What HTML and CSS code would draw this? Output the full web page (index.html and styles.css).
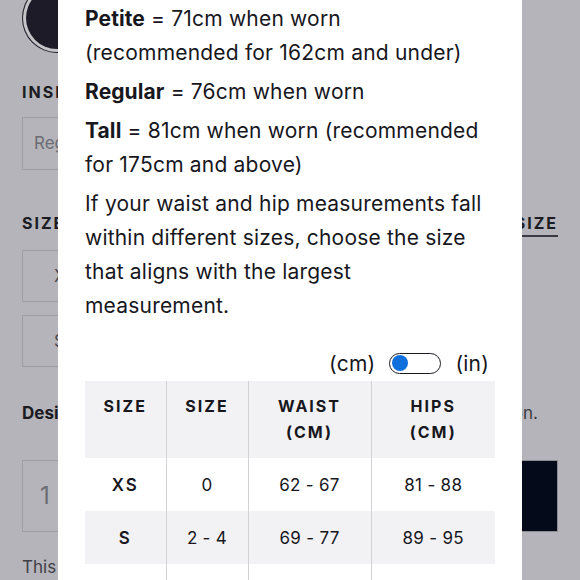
FILE: index.html
```html
<!DOCTYPE html>
<html>
<head>
<meta charset="utf-8">
<link rel="stylesheet" href="styles.css">
</head>
<body>
<div class="page">
  <div class="swatch-row"><span class="swatch"></span></div>
  <div class="label">INSEAM</div>
  <div class="select">Regular</div>
  <div class="label-row"><span class="label">SIZE</span><span class="label link">FIND MY SIZE</span></div>
  <div class="size-box first">XS</div>
  <div class="size-box">S</div>
  <div class="desc-row"><span class="desc-bold">Designed for you</span><span class="desc">in every option.</span></div>
  <div class="buy-row"><span class="qty">1</span><span class="buy"></span></div>
  <div class="note">This item ships free</div>
</div>

<div class="modal">
  <p class="para"><b>Petite</b> = 71cm when worn<br>(recommended for 162cm and under)</p>
  <p class="para"><b>Regular</b> = 76cm when worn</p>
  <p class="para"><b>Tall</b> = 81cm when worn (recommended for 175cm and above)</p>
  <p class="para">If your waist and hip measurements fall within different sizes, choose the size that aligns with the largest measurement.</p>
  <div class="units">
    <span>(cm)</span>
    <span class="toggle"><span class="knob"></span></span>
    <span>(in)</span>
  </div>
  <table class="chart">
    <colgroup><col class="c1"><col class="c2"><col class="c3"><col class="c4"></colgroup>
    <thead>
      <tr><th>SIZE</th><th>SIZE</th><th>WAIST<br>(CM)</th><th>HIPS<br>(CM)</th></tr>
    </thead>
    <tbody>
      <tr><td class="sz">XS</td><td>0</td><td>62 - 67</td><td>81 - 88</td></tr>
      <tr class="alt"><td class="sz">S</td><td>2 - 4</td><td>69 - 77</td><td>89 - 95</td></tr>
      <tr><td></td><td></td><td></td><td></td></tr>
    </tbody>
  </table>
</div>
</body>
</html>
```

FILE: styles.css
```css
html, body {
  margin: 0;
  padding: 0;
  width: 580px;
  height: 580px;
  overflow: hidden;
  background: #b4b4ba;
  font-family: Inter, "Liberation Sans", sans-serif;
}

.page {
  width: 536px;
  padding: 0 22px;
  display: flex;
  flex-direction: column;
  color: #1b1b22;
}

.swatch-row {
  height: 82px;
}
.swatch {
  display: block;
  width: 62px;
  height: 62px;
  border-radius: 50%;
  background: #1c1b27;
  box-shadow: 0 0 0 3px #c4c4c9, 0 0 0 4px #1c1b27;
  margin-left: 4px;
  margin-top: -13px;
}

.label {
  font-size: 16px;
  font-weight: 700;
  letter-spacing: 2px;
  height: 20px;
  line-height: 20px;
}

.select {
  margin-top: 15px;
  height: 53px;
  width: 200px;
  border: 1px solid #9d9da4;
  box-sizing: border-box;
  padding-left: 11px;
  line-height: 51px;
  font-size: 17px;
  color: #6c6c73;
}

.label-row {
  margin-top: 43px;
  display: flex;
  justify-content: space-between;
}
.link {
  text-decoration: underline;
  text-underline-offset: 6px;
  text-decoration-thickness: 2px;
  text-decoration-color: #3a3a44;
}

.size-box {
  margin-top: 13px;
  width: 90px;
  height: 52px;
  border: 1px solid #9d9da4;
  box-sizing: border-box;
  line-height: 50px;
  padding-left: 31px;
  font-size: 17px;
  color: #4a4a52;
}
.size-box.first { margin-top: 17px; }

.desc-row {
  margin-top: 36px;
  display: flex;
  justify-content: space-between;
  font-size: 17px;
  line-height: 20px;
  padding-right: 20px;
}
.desc-bold { font-weight: 700; }
.desc { color: #3a3a42; }

.buy-row {
  margin-top: 37px;
  display: flex;
  justify-content: space-between;
  height: 72px;
}
.qty {
  width: 120px;
  border: 1px solid #9d9da4;
  box-sizing: border-box;
  padding-left: 17px;
  line-height: 70px;
  font-size: 24px;
  color: #6c6c73;
}
.buy {
  width: 140px;
  background: #050a1a;
  border: 1px solid #8e8e96;
}

.note {
  margin-top: 25px;
  font-size: 17px;
  line-height: 20px;
  color: #3f3f47;
}

/* modal */
.modal {
  position: absolute;
  left: 58px;
  top: 0;
  width: 464px;
  height: 580px;
  overflow: hidden;
  background: #ffffff;
  box-sizing: border-box;
  padding: 2px 27px 0 27px;
  color: #17171d;
  font-size: 21px;
  letter-spacing: 0.2px;
}

.para {
  margin: 0 0 5px 0;
  line-height: 34px;
}
.para b { font-weight: 700; letter-spacing: 0.1px; }

.units {
  margin-top: 27px;
  display: flex;
  justify-content: flex-end;
  align-items: center;
  gap: 14px;
  padding-right: 6px;
  height: 26px;
}
.toggle {
  display: flex;
  align-items: center;
  width: 52px;
  height: 21px;
  box-sizing: border-box;
  border: 1.5px solid #1b1b22;
  border-radius: 11px;
  padding-left: 2px;
}
.knob {
  width: 16px;
  height: 16px;
  border-radius: 50%;
  background: #0f6fdc;
}

.chart {
  margin-top: 5px;
  border-collapse: collapse;
  width: 410px;
  table-layout: fixed;
  color: #17171d;
}
.c1 { width: 81px; }
.c2 { width: 82px; }
.c3 { width: 123px; }
.c4 { width: 124px; }

.chart th {
  background: #f2f2f4;
  height: 77px;
  font-size: 16px;
  font-weight: 700;
  letter-spacing: 2px;
  line-height: 26px;
  vertical-align: top;
  padding: 12px 0 0 0;
  box-sizing: border-box;
  text-align: center;
}
.chart th, .chart td {
  border-left: 1px solid #d2d2d6;
}
.chart th:first-child, .chart td:first-child { border-left: none; }
.chart td {
  height: 53px;
  text-align: center;
  font-size: 17px;
  padding: 0;
  letter-spacing: 0.3px;
}
.chart td.sz {
  font-weight: 600;
  letter-spacing: 2px;
}
.chart tr.alt td { background: #f2f2f4; }
```
